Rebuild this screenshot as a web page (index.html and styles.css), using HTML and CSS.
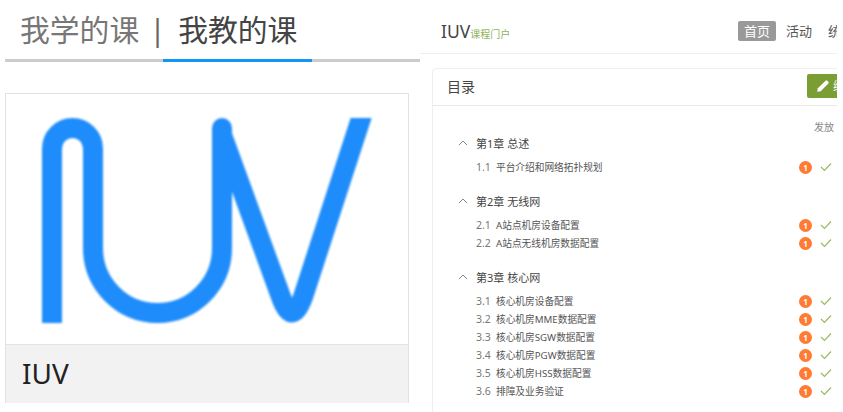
FILE: index.html
```html
<!DOCTYPE html>
<html lang="zh">
<head>
  <meta charset="UTF-8">
  <title>IUV 课程门户</title>
  <meta name="viewport" content="width=device-width, initial-scale=1">
  <link rel="stylesheet" href="styles.css">
</head>
<body>
  <div class="teach-side">
    <div class="tabs">
      <span class="tab">我学的课</span>
      <span class="tab-sep">|</span>
      <span class="tab active">我教的课</span>
    </div>
    <div class="course-card">
      <div class="course-cover">
        <svg class="course-logo" viewBox="6 94 402 250" width="402" height="250">
          <clipPath id="logo-top"><rect x="6" y="118" width="402" height="226"/></clipPath>
          <path d="M52 323V148.500A20.500 20.500 0 0 1 93 148.500V248A64.500 65 0 0 0 222 248V128"/>
          <circle class="logo-tip" cx="222" cy="128" r="10"/>
          <path clip-path="url(#logo-top)" d="M222 135L281 297Q292 328 303 297L367 100"/>
        </svg>
      </div>
      <div class="course-name">IUV</div>
    </div>
  </div>

  <div class="portal-side">
    <div class="topbar">
      <div class="brand">IUV<small>课程门户</small></div>
      <div class="nav">
        <span class="nav-item current">首页</span>
        <span class="nav-item">活动</span>
        <span class="nav-item">统计</span>
      </div>
    </div>
    <div class="panel">
      <div class="panel-head">
        <span class="panel-title">目录</span>
        <span class="edit-btn">
          <svg viewBox="0 0 12 12" width="14" height="14"><path d="M1 11l.6-3L8.200 1.400a1 1 0 0 1 1.400 0l1 1a1 1 0 0 1 0 1.400L4 10.400z"/></svg>
          编辑
        </span>
      </div>
      <div class="toc">
        <div class="toc-label">发放</div>

        <div class="chapter"><svg class="chev" viewBox="0 0 10 6" width="10" height="6"><polyline points="1,5 5,1 9,5"/></svg>第1章 总述</div>
        <div class="section"><span class="num">1.1</span><span class="name">平台介绍和网络拓扑规划</span><span class="badge">1</span><svg class="check" viewBox="0 0 12 10" width="12" height="10"><polyline points="1,5 4.500,8.500 11,1.500"/></svg></div>

        <div class="chapter"><svg class="chev" viewBox="0 0 10 6" width="10" height="6"><polyline points="1,5 5,1 9,5"/></svg>第2章 无线网</div>
        <div class="section"><span class="num">2.1</span><span class="name">A站点机房设备配置</span><span class="badge">1</span><svg class="check" viewBox="0 0 12 10" width="12" height="10"><polyline points="1,5 4.500,8.500 11,1.500"/></svg></div>
        <div class="section"><span class="num">2.2</span><span class="name">A站点无线机房数据配置</span><span class="badge">1</span><svg class="check" viewBox="0 0 12 10" width="12" height="10"><polyline points="1,5 4.500,8.500 11,1.500"/></svg></div>

        <div class="chapter"><svg class="chev" viewBox="0 0 10 6" width="10" height="6"><polyline points="1,5 5,1 9,5"/></svg>第3章 核心网</div>
        <div class="section"><span class="num">3.1</span><span class="name">核心机房设备配置</span><span class="badge">1</span><svg class="check" viewBox="0 0 12 10" width="12" height="10"><polyline points="1,5 4.500,8.500 11,1.500"/></svg></div>
        <div class="section"><span class="num">3.2</span><span class="name">核心机房MME数据配置</span><span class="badge">1</span><svg class="check" viewBox="0 0 12 10" width="12" height="10"><polyline points="1,5 4.500,8.500 11,1.500"/></svg></div>
        <div class="section"><span class="num">3.3</span><span class="name">核心机房SGW数据配置</span><span class="badge">1</span><svg class="check" viewBox="0 0 12 10" width="12" height="10"><polyline points="1,5 4.500,8.500 11,1.500"/></svg></div>
        <div class="section"><span class="num">3.4</span><span class="name">核心机房PGW数据配置</span><span class="badge">1</span><svg class="check" viewBox="0 0 12 10" width="12" height="10"><polyline points="1,5 4.500,8.500 11,1.500"/></svg></div>
        <div class="section"><span class="num">3.5</span><span class="name">核心机房HSS数据配置</span><span class="badge">1</span><svg class="check" viewBox="0 0 12 10" width="12" height="10"><polyline points="1,5 4.500,8.500 11,1.500"/></svg></div>
        <div class="section"><span class="num">3.6</span><span class="name">排障及业务验证</span><span class="badge">1</span><svg class="check" viewBox="0 0 12 10" width="12" height="10"><polyline points="1,5 4.500,8.500 11,1.500"/></svg></div>
      </div>
    </div>
  </div>
</body>
</html>
```

FILE: styles.css
```css
html, body {
  height: 412px;
  overflow: hidden;
}
body {
  margin: 0;
  background: #fff;
  color: #555;
  font-family: "Noto Sans", "Noto Sans CJK SC", sans-serif;
  display: flex;
  align-items: flex-start;
}

/* left half */
.teach-side {
  width: 415px;
  margin-left: 5px;
  flex: none;
}
.tabs {
  display: flex;
  align-items: center;
  height: 59px;
  border-bottom: 3px solid #ccc;
  font-size: 29.800px;
}
.tab {
  box-sizing: border-box;
  height: 62px;
  line-height: 60px;
  padding: 0 15px;
  color: #777;
  margin-bottom: -3px;
  border-bottom: 3px solid transparent;
}
.tab.active {
  color: #444;
  border-bottom-color: #1296f5;
}
.tab-sep {
  width: 9px;
  text-indent: -5px;
  color: #666;
  font-size: 30px;
}
.course-card {
  width: 402px;
  margin-top: 31px;
  border: 1px solid #e2e2e2;
  border-bottom: 0;
}
.course-cover {
  height: 250px;
  overflow: hidden;
}
.course-logo {
  display: block;
  filter: blur(1px);
}
.course-logo path {
  fill: none;
  stroke: #1e8cfa;
  stroke-width: 20;
}
.course-logo .logo-tip {
  fill: #1e8cfa;
}
.course-name {
  height: 58px;
  line-height: 56px;
  border-top: 1px solid #e2e2e2;
  background: #f2f2f2;
  padding-left: 16px;
  font-size: 28px;
  color: #222;
}

/* right half */
.portal-side {
  width: 417px;
  height: 412px;
  overflow: hidden;
  flex: none;
}
.topbar {
  display: flex;
  align-items: center;
  justify-content: space-between;
  box-sizing: border-box;
  width: 480px;
  height: 54px;
  padding: 8px 0 0 21px;
  border-bottom: 1px solid #eee;
}
.brand {
  font-size: 17.500px;
  color: #444;
}
.brand small {
  font-size: 10px;
  color: #8fb25a;
}
.nav {
  display: flex;
  gap: 4px;
  width: 162px;
  flex: none;
  font-size: 13px;
  color: #555;
}
.nav-item {
  padding: 0 6px;
  line-height: 20px;
  border-radius: 2px;
}
.nav-item.current {
  background: #999;
  color: #fff;
}
.panel {
  width: 460px;
  margin: 14px 0 0 12px;
  border: 1px solid #eee;
  border-radius: 4px;
}
.panel-head {
  display: flex;
  align-items: center;
  justify-content: space-between;
  height: 34px;
  padding: 0 26px 2px 14px;
  border-bottom: 1px solid #e8e8e8;
}
.panel-title {
  font-size: 14px;
  color: #444;
}
.edit-btn {
  display: flex;
  align-items: center;
  gap: 3px;
  box-sizing: border-box;
  width: 60px;
  height: 24px;
  padding-left: 9px;
  background: #7a9e33;
  border-radius: 2px;
  color: #fff;
  font-size: 12px;
}
.edit-btn svg {
  fill: #fff;
}
.toc {
  padding: 0 61px 40px 25px;
}
.toc-label {
  height: 22px;
  padding-top: 14px;
  box-sizing: border-box;
  margin-right: -2px;
  text-align: right;
  font-size: 10px;
  line-height: 14px;
  color: #888;
}
.chapter {
  display: flex;
  align-items: center;
  height: 30px;
  margin-top: 10px;
  font-size: 11px;
  color: #444;
  position: relative;
  padding-left: 18px;
}
.toc-label + .chapter {
  margin-top: 0;
}
.chev {
  position: absolute;
  left: 0;
  top: 12px;
  fill: none;
  stroke: #888;
  stroke-width: 1;
}
.section {
  display: flex;
  align-items: center;
  height: 18px;
  padding-left: 18px;
  font-size: 9.700px;
  color: #555;
}
.num {
  width: 20px;
  font-size: 10.500px;
  color: #777;
}
.name {
  flex: 1;
}
.badge {
  width: 13px;
  height: 13px;
  line-height: 13px;
  border-radius: 50%;
  background: #ff7a33;
  color: #fff;
  font-size: 8px;
  font-weight: bold;
  text-align: center;
}
.check {
  margin-left: 8px;
  fill: none;
  stroke: #9aba62;
  stroke-width: 1.200;
}
```
